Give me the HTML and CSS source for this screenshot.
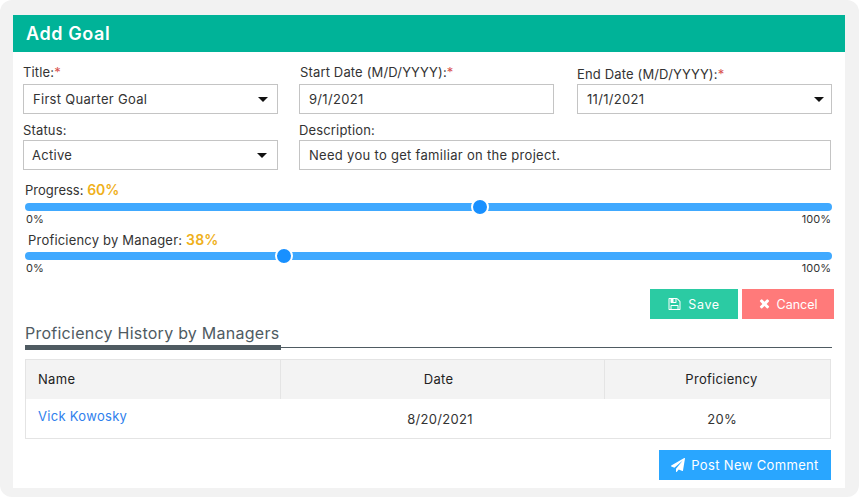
FILE: index.html
```html
<!DOCTYPE html>
<html lang="en">
<head>
    <meta charset="UTF-8">
    <meta name="viewport" content="width=device-width, initial-scale=1.0">
    <title>Add Goal</title>
    <link rel="stylesheet" href="styles.css">
</head>
<body>
    <div class="card">
        <h1 class="card-title">Add Goal</h1>

        <div class="form-row row-one">
            <div class="field">
                <label class="field-label">Title:<span class="req">*</span></label>
                <div class="select-box"><span>First Quarter Goal</span><i class="caret"></i></div>
            </div>
            <div class="field">
                <label class="field-label label-start">Start Date (M/D/YYYY):<span class="req">*</span></label>
                <div class="text-box">9/1/2021</div>
            </div>
            <div class="field">
                <label class="field-label label-end">End Date (M/D/YYYY):<span class="req">*</span></label>
                <div class="select-box date"><span>11/1/2021</span><i class="caret"></i></div>
            </div>
        </div>

        <div class="form-row row-two">
            <div class="field">
                <label class="field-label">Status:</label>
                <div class="select-box"><span>Active</span><i class="caret"></i></div>
            </div>
            <div class="field field-wide">
                <label class="field-label">Description:</label>
                <div class="text-box">Need you to get familiar on the project.</div>
            </div>
        </div>

        <div class="slider-block">
            <div class="slider-label first">Progress: <b>60%</b></div>
            <div class="track"><i class="thumb" style="left: 56.4%"></i></div>
            <div class="scale"><span>0%</span><span>100%</span></div>
        </div>
        <div class="slider-block">
            <div class="slider-label indent">Proficiency by Manager: <b>38%</b></div>
            <div class="track"><i class="thumb" style="left: 32.1%"></i></div>
            <div class="scale"><span>0%</span><span>100%</span></div>
        </div>

        <div class="actions">
            <button class="btn btn-save">
                <svg class="icon" viewBox="0 0 1536 1792"><path d="M384 1536h768v-384h-768v384zm896 0h128v-896q0-14-10-38.500t-20-34.500l-281-281q-10-10-34-20t-39-10v416q0 40-28 68t-68 28h-576q-40 0-68-28t-28-68v-416h-128v1280h128v-416q0-40 28-68t68-28h832q40 0 68 28t28 68v416zm-384-928v-320q0-13-9.500-22.500t-22.500-9.500h-192q-13 0-22.500 9.500t-9.500 22.500v320q0 13 9.500 22.500t22.500 9.500h192q13 0 22.500-9.500t9.500-22.500zm640 32v928q0 40-28 68t-68 28h-1344q-40 0-68-28t-28-68v-1344q0-40 28-68t68-28h928q40 0 88 20t76 48l280 280q28 28 48 76t20 88z"/></svg>
                Save
            </button>
            <button class="btn btn-cancel">
                <svg class="icon" viewBox="0 0 1408 1792"><path d="M1298 1242q0 40-28 68l-136 136q-28 28-68 28t-68-28l-294-294-294 294q-28 28-68 28t-68-28l-136-136q-28-28-28-68t28-68l294-294-294-294q-28-28-28-68t28-68l136-136q28-28 68-28t68 28l294 294 294-294q28-28 68-28t68 28l136 136q28 28 28 68t-28 68l-294 294 294 294q28 28 28 68z"/></svg>
                Cancel
            </button>
        </div>

        <div class="section-head"><h2>Proficiency History by Managers</h2></div>

        <table class="history">
            <thead>
                <tr>
                    <th class="col-name">Name</th>
                    <th class="col-date">Date</th>
                    <th class="col-prof">Proficiency</th>
                </tr>
            </thead>
            <tbody>
                <tr>
                    <td class="col-name"><a href="#">Vick Kowosky</a></td>
                    <td class="col-date">8/20/2021</td>
                    <td class="col-prof">20%</td>
                </tr>
            </tbody>
        </table>

        <div class="post-row">
            <button class="btn btn-post">
                <svg class="icon" viewBox="0 0 1792 1792"><path d="M1764 11q33 24 27 64l-256 1536q-5 29-32 45-14 8-31 8-11 0-24-5l-453-185-242 295q-18 23-49 23-13 0-22-4-19-7-30.500-23.500t-11.500-36.500v-349l864-1059-1069 925-395-162q-37-14-40-55-2-40 32-59l1664-960q15-9 32-9 20 0 36 11z"/></svg>
                Post New Comment
            </button>
        </div>
    </div>
</body>
</html>
```

FILE: styles.css
```css
* {
    box-sizing: border-box;
}
html {
    background: #fff;
}
body {
    margin: 0;
    width: 859px;
    height: 497px;
    padding: 15px 14px 9px 13px;
    background: #f2f2f2;
    border-radius: 12px;
    overflow: hidden;
    font-family: "Inter", "Open Sans", sans-serif;
    font-size: 13px;
    letter-spacing: 0.3px;
    color: #333;
}
.card {
    height: 473px;
    background: #fff;
    padding: 0 13px 0 10px;
}
.card-title {
    margin: 0 -13px 0 -10px;
    height: 37px;
    padding-left: 13px;
    background: #00b398;
    color: #fff;
    font-size: 18px;
    font-weight: 600;
    letter-spacing: 0.6px;
    line-height: 38px;
}
.form-row {
    display: flex;
    gap: 21px;
}
.row-one {
    height: 62px;
    align-items: flex-end;
}
.row-two {
    height: 56px;
    align-items: flex-end;
}
.row-one .field:last-child {
    margin-left: 2px;
}
.field {
    width: 255px;
}
.field-wide {
    width: 532px;
}
.field-label {
    display: block;
    height: 18px;
    line-height: 12px;
    letter-spacing: 0.15px;
}
.row-two .field-label {
    line-height: 16px;
}
.label-start {
    padding-left: 1px;
    margin-top: -2px;
    height: 20px;
    line-height: 16px;
}
.label-end {
    margin-top: -1px;
    height: 19px;
    line-height: 18px;
}
.req {
    color: #d9534f;
}
.select-box,
.text-box {
    display: flex;
    align-items: center;
    justify-content: space-between;
    height: 30px;
    padding: 0 9px;
    border: 1px solid #c4c4c4;
    background: #fff;
    color: #333;
}
.select-box.date {
    padding-right: 7px;
}
.row-two .select-box {
    padding-left: 8px;
    padding-right: 10px;
}
.caret {
    width: 0;
    height: 0;
    border-left: 5px solid transparent;
    border-right: 5px solid transparent;
    border-top: 5px solid #111;
}
.slider-block {
    margin: 0 0 0 2px;
}
.slider-label {
    height: 20px;
    line-height: 16px;
    letter-spacing: 0.2px;
}
.slider-label.first {
    height: 33px;
    padding-top: 12px;
    letter-spacing: 0;
}
.slider-label b {
    color: #efb01a;
    font-size: 14px;
    font-weight: 600;
}
.slider-label.indent {
    padding-left: 3px;
}
.track {
    position: relative;
    height: 8px;
    background: #40a9ff;
    border-radius: 4px;
}
.thumb {
    position: absolute;
    top: 50%;
    width: 18px;
    height: 18px;
    margin: -9px 0 0 -9px;
    background: #1890ff;
    border: 2px solid #fff;
    border-radius: 50%;
}
.scale {
    display: flex;
    justify-content: space-between;
    height: 21px;
    padding: 2px 1px 0 1px;
    font-size: 11px;
    letter-spacing: 0;
    line-height: 12px;
}
.actions {
    display: flex;
    justify-content: flex-end;
    gap: 4px;
    margin: 8px -2px 0 0;
}
.btn {
    display: flex;
    align-items: center;
    justify-content: center;
    gap: 7px;
    height: 30px;
    border: none;
    color: #fff;
    font-family: inherit;
    font-size: 12.5px;
    letter-spacing: 0;
}
.icon {
    width: 13px;
    height: 14px;
    fill: #fff;
}
.btn-save {
    width: 88px;
    background: #2bcba3;
    letter-spacing: 0.6px;
}
.btn-cancel {
    width: 92px;
    background: #ff7a7a;
}
.btn-cancel .icon {
    width: 11px;
}
.section-head {
    margin: 3px 0 0 2px;
    height: 26px;
    border-bottom: 1px solid #4f5b62;
}
.section-head h2 {
    display: inline-block;
    margin: 0;
    width: 256px;
    height: 28px;
    border-bottom: 5px solid #4f5b62;
    color: #4f5b62;
    font-size: 16px;
    font-weight: 400;
    letter-spacing: 0.25px;
    line-height: 22px;
    white-space: nowrap;
}
.history {
    width: 806px;
    margin: 11px 0 0 2px;
    border-collapse: collapse;
    border: 1px solid #e4e4e4;
    table-layout: fixed;
}
.history th {
    height: 39px;
    padding: 0;
    background: #f3f3f3;
    border-left: 1px solid #e4e4e4;
    color: #222;
    font-weight: 400;
    text-align: center;
}
.history td {
    height: 40px;
    padding: 0;
    text-align: center;
}
.history .col-name {
    width: 255px;
    padding-left: 12px;
    text-align: left;
}
.col-date {
    width: 324px;
}
.history th.col-date {
    padding-right: 8px;
}
.history td.col-date {
    padding: 2px 5px 0 0;
}
.history .col-prof {
    padding-left: 8px;
}
.history td.col-prof {
    padding: 2px 0 0 10px;
}
.history td.col-name {
    padding-bottom: 5px;
}
.history a {
    color: #2f80ed;
    text-decoration: none;
}
.post-row {
    display: flex;
    justify-content: flex-end;
    margin: 11px 1px 0 0;
}
.btn-post {
    width: 172px;
    gap: 6px;
    background: #29a6ff;
    font-size: 13px;
    letter-spacing: 0.35px;
}
.btn-post .icon {
    width: 14px;
    height: 14px;
}
```
